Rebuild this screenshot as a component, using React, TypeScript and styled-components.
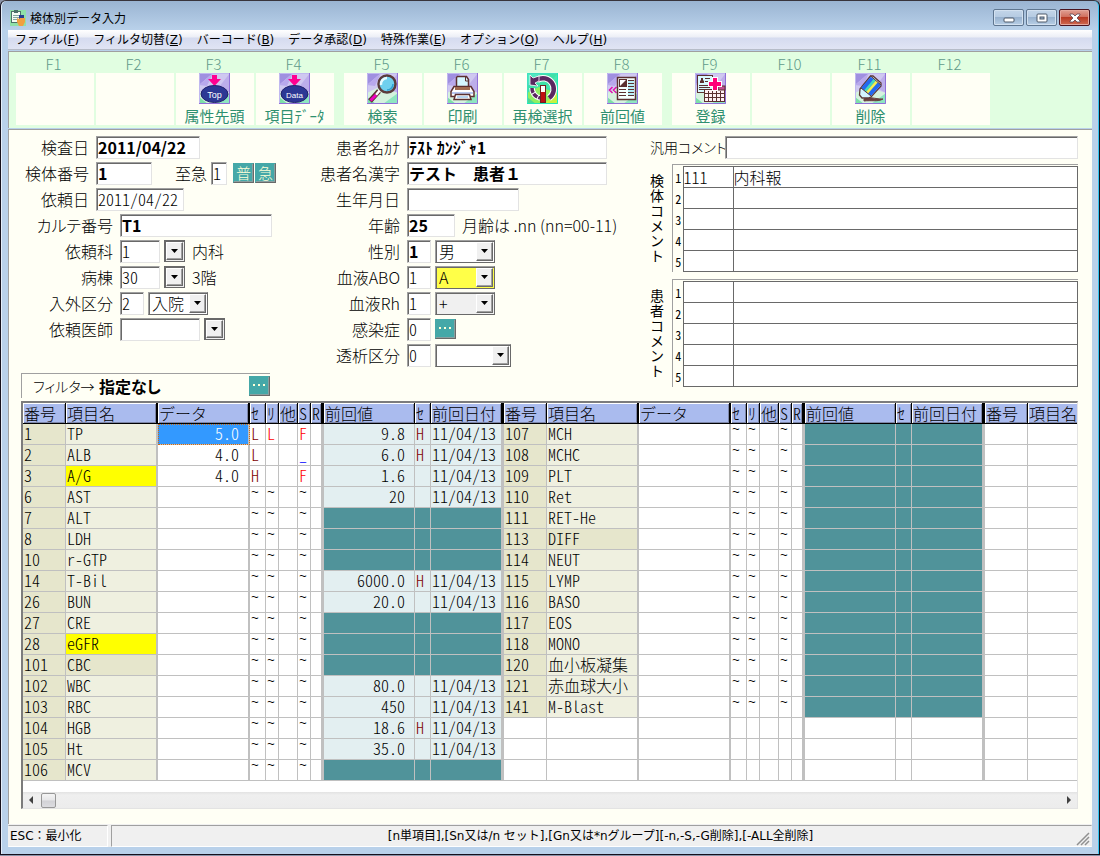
import React from "react";
import styled, { createGlobalStyle, css } from "styled-components";

const jp = '"Noto Sans CJK JP", "Liberation Sans", sans-serif';
const ui = '"DejaVu Sans", "Noto Sans CJK JP", sans-serif';

const GlobalStyle = createGlobalStyle`
  * { box-sizing: border-box; }
  html, body { margin: 0; padding: 0; }
  body { background: #10182c; font-family: ${jp}; font-size: 16px; font-weight: 300; color: #000; }
  button, input, select { font-family: inherit; font-weight: inherit; color: inherit; margin: 0; }
`;

const halfWidth = css`
  font-feature-settings: "hwid";
`;

const sunken = css`
  border: 1px solid #a0a0a0;
  border-right-color: #e3e3e3;
  border-bottom-color: #e3e3e3;
  box-shadow: inset 1px 1px 0 #696969;
`;

const raised = css`
  border: 1px solid #fff;
  border-right-color: #696969;
  border-bottom-color: #696969;
  box-shadow: inset -1px -1px 0 #a0a0a0;
`;

/* ---------- window ---------- */

const Desktop = styled.div`
  min-height: 100vh;
  padding-bottom: 1px;
  background: #8a93a8;
  display: flex;
`;

const Window = styled.div`
  flex: 1;
  min-width: 0;
  display: flex;
  flex-direction: column;
  padding: 0 7px 7px 7px;
  background: #b9d1ea;
  border: 1px solid #15101c;
  border-top-color: #38343c;
  border-radius: 6px 6px 0 0;
  box-shadow: inset -1px 0 0 #35c5f0, inset 1px 0 0 #e4eefa;
  background-image: linear-gradient(#9ab4d2, #b9d1ea 29px);
`;

const TitleBar = styled.header`
  height: 29px;
  padding: 4px 2px 0 2px;
  display: flex;
  align-items: center;
  gap: 4px;
`;

const TitleText = styled.h1`
  flex: 1;
  margin: 0;
  font-size: 12px;
  font-weight: 400;
  line-height: 18px;
`;

const Caption = styled.div`
  display: flex;
  gap: 2px;
`;

const CaptionButton = styled.button<{ $close?: boolean }>`
  width: 31px;
  height: 17px;
  padding: 0;
  display: flex;
  align-items: center;
  justify-content: center;
  border: 1px solid ${(p) => (p.$close ? "#4a1420" : "#5f7690")};
  border-radius: 2px;
  box-shadow: inset 0 0 0 1px ${(p) => (p.$close ? "#e5a79c" : "#d3e1f0")};
  background: ${(p) =>
    p.$close
      ? "linear-gradient(#e0a094, #d0705f 45%, #b83a24 50%, #cf6a50)"
      : "linear-gradient(#c3d5e9, #b6cbe2 45%, #98b2cf 50%, #b8cfe6)"};
`;

const MenuBar = styled.nav`
  height: 20px;
  padding-left: 7px;
  display: flex;
  gap: 14px;
  background: linear-gradient(#fff, #eceef6 7px, #d5dbef 8px, #e0e4f4);
  border-bottom: 1px solid #b6bcc8;
`;

const MenuItem = styled.button`
  padding: 2px 0 0 0;
  border: 0;
  background: none;
  font-family: ${ui};
  font-size: 12px;
  font-weight: 400;
  line-height: 17px;
  white-space: nowrap;
`;

/* ---------- toolbar ---------- */

const ToolBar = styled.div`
  margin-top: 1px;
  height: 77px;
  padding: 4px 0 0 7px;
  display: flex;
  gap: 10px;
  background: #e1fee1;
  border-top: 1px solid #a0a0a0;
  border-left: 1px solid #a0a0a0;
`;

const ToolGroup = styled.div`
  display: flex;
  gap: 2px;
`;

const ToolCell = styled.div`
  width: 78px;
  display: flex;
  flex-direction: column;
`;

const KeyName = styled.span`
  height: 17px;
  padding-right: 3px;
  font-size: 15px;
  line-height: 16px;
  text-align: center;
  color: #5f9a8a;
`;

const ToolButton = styled.button`
  width: 100%;
  height: 52px;
  padding: 0 1px 0 0;
  border: 0;
  background: #fffff5;
  display: flex;
  flex-direction: column;
  align-items: center;
  gap: 3px;
  font-size: 15px;
  font-weight: 400;
  line-height: 18px;
  color: #2f9070;
  white-space: nowrap;
`;

/* ---------- form ---------- */

const Body = styled.main`
  flex: 1;
  padding: 6px 14px 15px 12px;
  background: #fffff5;
  border-top: 1px solid #a0a0a0;
  border-left: 1px solid #a0a0a0;
  margin-top: 1px;
`;

const Form = styled.form`
  display: flex;
  align-items: flex-start;
`;

const LeftColumn = styled.section`
  width: 295px;
  display: flex;
  flex-direction: column;
  gap: 4px;
`;

const MiddleColumn = styled(LeftColumn)`
  width: 334px;
`;

const RightColumn = styled.section`
  flex: 1;
  min-width: 0;
`;

const Row = styled.div`
  height: 22px;
  display: flex;
  align-items: center;
  gap: 4px;
`;

const Label = styled.label<{ $w: number }>`
  width: ${(p) => p.$w}px;
  margin-right: 3px;
  text-align: right;
  line-height: 20px;
  white-space: nowrap;
  font-feature-settings: "palt";
`;

const UrgentLabel = styled.label`
  margin-left: 19px;
  line-height: 20px;
`;

const Field = styled.input<{ $w: number; $bold?: boolean }>`
  width: ${(p) => p.$w}px;
  height: 23px;
  padding: 0 1px 1px 1px;
  font-size: 16px;
  font-weight: ${(p) => (p.$bold ? 700 : "inherit")};
  background: #fff;
  border-radius: 0;
  ${sunken}
  ${(p) => !p.$bold && halfWidth}
`;

const WideField = styled(Field)`
  flex: 1;
  min-width: 0;
`;

const Note = styled.span`
  margin-left: 3px;
  line-height: 20px;
  white-space: nowrap;
  font-feature-settings: "palt";
`;

const Chip = styled.button`
  width: 21px;
  height: 20px;
  padding: 0;
  display: flex;
  align-items: center;
  justify-content: center;
  font-size: 15px;
  line-height: 16px;
  color: #ffffd8;
  background: #45a8a8;
  border: 1px solid #45a8a8;
  border-right-color: #696969;
  border-bottom-color: #696969;
  box-shadow: inset -1px -1px 0 #8aa0a0;
`;

const ChipPair = styled.div`
  display: flex;
  gap: 1px;
  margin-left: 2px;
`;

const DropButton = styled.button`
  width: 21px;
  height: 22px;
  padding: 1px;
  background: #f0f0f0;
  ${sunken}
  border-color: #696969;
`;

const DropFace = styled.span`
  width: 100%;
  height: 100%;
  display: flex;
  align-items: center;
  justify-content: center;
  background: #f0f0f0;
  ${raised}
`;

const SelectBox = styled.span<{ $w: number; $bg: string }>`
  width: ${(p) => p.$w}px;
  height: 23px;
  padding: 1px;
  display: grid;
  grid-template-columns: 1fr 17px;
  background: ${(p) => p.$bg};
  ${sunken}
  border-right-color: #696969;
  border-bottom-color: #696969;
  select {
    grid-area: 1 / 1 / 2 / 3;
    width: 100%;
    height: 100%;
    padding: 0 0 0 2px;
    appearance: none;
    border: 0;
    background: transparent;
    font-size: 16px;
    line-height: 18px;
  }
  > span {
    grid-area: 1 / 2 / 2 / 3;
    pointer-events: none;
  }
`;

const FilterPanel = styled.div`
  width: 249px;
  height: 25px;
  margin-top: 29px;
  padding-left: 11px;
  display: flex;
  align-items: center;
  border-top: 1px solid #a0a0a0;
  border-left: 1px solid #a0a0a0;
`;

const FilterCaption = styled.span`
  width: 66px;
  font-size: 14px;
  font-feature-settings: "palt";
`;

const FilterValue = styled.strong`
  flex: 1;
  font-size: 16px;
  font-weight: 700;
  font-feature-settings: "palt";
`;

const CommentRow = styled.div`
  height: 22px;
  display: flex;
  align-items: center;
  margin-bottom: 6px;
  label {
    width: 75px;
    font-size: 14px;
    font-feature-settings: "palt";
    white-space: nowrap;
  }
`;

const CommentBlock = styled.div`
  display: flex;
  margin-bottom: 7px;
`;

const VerticalCaption = styled.div`
  width: 22px;
  padding: 9px 8px 0 0;
  font-size: 14px;
  font-weight: 400;
  line-height: 15px;
  text-align: center;
  word-break: break-all;
`;

const CommentPanel = styled.div`
  flex: 1;
  height: 108px;
  padding: 1px 0 0 0;
  border-top: 1px solid #a0a0a0;
  border-left: 1px solid #a0a0a0;
`;

const CommentTable = styled.table`
  width: 100%;
  table-layout: fixed;
  border-collapse: collapse;
  th {
    width: 10px;
    padding: 2px 0 0 1px;
    font-size: 12px;
    font-weight: 400;
    line-height: 18px;
    ${halfWidth}
  }
  td {
    height: 21px;
    padding: 0;
    border: 1px solid #696969;
    background: #fff;
  }
  td:nth-child(2) {
    width: 50px;
  }
  input {
    display: block;
    width: 100%;
    height: 20px;
    padding: 0 0 1px 0;
    border: 0;
    background: none;
    font-size: 16px;
    ${halfWidth}
  }
`;

/* ---------- result grid ---------- */

const GridFrame = styled.div`
  margin-top: 3px;
  overflow: hidden;
  background: #fff;
  border: 2px solid #7c7c7c;
  border-right: 1px solid #e3e3e3;
  border-bottom: 1px solid #e3e3e3;
`;

const Grid = styled.table`
  width: 1097px;
  margin-bottom: 11px;
  table-layout: fixed;
  border-collapse: separate;
  border-spacing: 0;
  font-size: 16px;
  ${halfWidth}
`;

const HeadCell = styled.th<{ $line: number }>`
  height: 21px;
  padding: 0 0 1px 1px;
  font-weight: inherit;
  line-height: 18px;
  text-align: left;
  white-space: nowrap;
  background: #aabbee;
  border-right: ${(p) => p.$line}px solid #000;
  border-bottom: 1px solid #000;
  box-shadow: inset 1px 1px 0 #fff, inset -1px -1px 0 #7d86a8;
`;

const Cell = styled.td<{ $line: number; $bg?: string; $ink?: string; $right?: boolean; $top?: boolean; $selected?: boolean }>`
  height: 21px;
  padding: 0 ${(p) => (p.$right ? 9 : 0)}px ${(p) => (p.$top ? 0 : 3)}px 1px;
  line-height: 16px;
  vertical-align: ${(p) => (p.$top ? "top" : "middle")};
  white-space: nowrap;
  text-align: ${(p) => (p.$right ? "right" : "left")};
  color: ${(p) => p.$ink ?? "#000"};
  background: ${(p) => p.$bg ?? "#fff"};
  background-clip: padding-box;
  border-right: ${(p) => p.$line}px solid #c0c0c0;
  border-bottom: 1px solid #c0c0c0;
  ${(p) => p.$selected && "outline: 1px dotted #d06a10; outline-offset: -1px;"}
`;

const Tilde = styled.span`
  display: block;
  font-family: "Liberation Mono", monospace;
  font-size: 13px;
  line-height: 12px;
`;

const ScrollBar = styled.div`
  height: 16px;
  padding: 0 5px;
  display: flex;
  align-items: center;
  background: linear-gradient(#e2e2e2, #efefef 3px, #ececec);
`;

const Thumb = styled.span`
  width: 15px;
  height: 15px;
  margin: 0 auto 0 8px;
  border: 1px solid #979797;
  border-radius: 2px;
  background: linear-gradient(#f4f4f4, #e6e6e8 48%, #d2d2d6 52%, #dcdce0);
`;

/* ---------- status bar ---------- */

const StatusBar = styled.footer`
  height: 23px;
  padding-top: 1px;
  display: flex;
  gap: 3px;
  background: #f0f0f0;
  font-family: ${ui};
  font-size: 12px;
  font-weight: 400;
  line-height: 20px;
`;

const StatusPane = styled.div<{ $w?: number }>`
  ${(p) => (p.$w ? `width: ${p.$w}px;` : "flex: 1;")}
  padding: 0 1px;
  display: flex;
  justify-content: ${(p) => (p.$w ? "flex-start" : "center")};
  border: 1px solid #a0a0a0;
  border-left-color: ${(p) => (p.$w ? "#f0f0f0" : "#a0a0a0")};
  border-right-color: ${(p) => (p.$w ? "#fff" : "#f0f0f0")};
  border-bottom-color: #fff;
  white-space: nowrap;
`;

const StatusText = styled.span`
  flex: 1;
  padding-left: 12px;
  text-align: center;
`;

/* ---------- drawings ---------- */

const Triangle = () => (
  <svg width="7" height="4" viewBox="0 0 7 4">
    <path d="M0 0h7L3.500 4z" fill="#000" />
  </svg>
);

const Dots = () => (
  <svg width="13" height="8" viewBox="0 0 13 8">
    <path d="M0 2h2v2h-2zM5 2h2v2h-2zM10 2h2v2h-2z" fill="#ffffd8" />
  </svg>
);

function Tile({ children, green }: { children: React.ReactNode; green?: boolean }) {
  return (
    <svg width="31" height="31" viewBox="0 0 31 31">
      <rect width="31" height="31" fill={green ? "#3fe0a8" : "#cfc8f0"} />
      <path d="M0 0h14L0 12z" fill={green ? "#50e8c0" : "#a090e0"} />
      <path d="M14 0L8 13L0 12z" fill={green ? "#58dcc8" : "#b8a8ec"} />
      <path d="M31 0L20 14L31 20z" fill={green ? "#48e8b0" : "#bcaeea"} />
      <path d="M0 20L12 14L31 20V31H0z" fill={green ? "#90f060" : "#d5f2de"} />
      <path d="M31 20L16 31H31z" fill={green ? "#c8f040" : "#8ee6c0"} />
      <path d="M0 24L9 31H0z" fill={green ? "#50d890" : "#7ce0a8"} />
      <path d="M.5 31V.5H31" fill="none" stroke={green ? "#40e0c0" : "#c0b8f0"} />
      <path d="M30.500 0V30.500H0" fill="none" stroke={green ? "#20e8b8" : "#9070d8"} />
      {children}
    </svg>
  );
}

function Badge({ word }: { word: string }) {
  return (
    <Tile>
      <path d="M13 2h5v4h4l-6.500 7L9 6h4z" fill="#ff0090" />
      <ellipse cx="15.500" cy="21" rx="13.500" ry="8.500" fill="#2c3894" stroke="#20206c" />
      <text x="15.500" y="24.500" textAnchor="middle" fontSize={word.length > 3 ? 8 : 9} fontFamily="Liberation Sans" fontWeight="400" fill="#fff">
        {word}
      </text>
    </Tile>
  );
}

const icons: Record<string, React.ReactNode> = {
  top: <Badge word="Top" />,
  data: <Badge word="Data" />,
  search: (
    <Tile>
      <path d="M12 18L3 28" stroke="#5c3030" strokeWidth="5" />
      <path d="M13 17L9 22" stroke="#fff" strokeWidth="2.500" />
      <path d="M9 22L3.500 27.500" stroke="#f000c0" strokeWidth="3" />
      <circle cx="20" cy="11" r="8.500" fill="#6fd0ee" stroke="#5a3c3c" strokeWidth="2.500" />
      <path d="M14 12a6 6 0 0 1 6-7" fill="none" stroke="#e8fbff" strokeWidth="2.500" />
      <path d="M20 17a6 6 0 0 0 6-6" fill="none" stroke="#30a0d0" strokeWidth="1.500" />
    </Tile>
  ),
  print: (
    <Tile>
      <path d="M9.500 14.500V4.500l1-1h9l2 3v8z" fill="#d5f6ff" stroke="#5c3030" strokeWidth="1.500" />
      <path d="M18.500 4v4h3" fill="none" stroke="#5c3030" />
      <path d="M7 13.500h17l3 5v5H4v-5z" fill="#fff" stroke="#5c3030" strokeWidth="1.500" />
      <path d="M8 14h15v3H8z" fill="#a06a50" />
      <path d="M5 19h21v2H5z" fill="#b8c8f0" />
      <path d="M8.500 21.500h14l1.500 5h-17z" fill="#fff" stroke="#5c3030" strokeWidth="1.500" />
      <path d="M10 24h11" stroke="#6fa8e0" />
    </Tile>
  ),
  retry: (
    <Tile green>
      <path d="M10 7a10.500 10.500 0 1 1 12 18" fill="none" stroke="#fff" strokeWidth="6.500" />
      <path d="M10 7a10.500 10.500 0 1 1 12 18" fill="none" stroke="#5a2860" strokeWidth="4.500" />
      <path d="M3 12V2l3 3 6-2v5l-4 2 3 3z" fill="#5a2860" stroke="#fff" strokeWidth=".8" />
      <path d="M5 15a10 10 0 0 0 8 10" fill="none" stroke="#fff" strokeWidth="5.500" />
      <path d="M5 15a10 10 0 0 0 8 10" fill="none" stroke="#5a2860" strokeWidth="3.500" strokeDasharray="5 1" />
      <rect x="13.500" y="12.500" width="5" height="17" fill="#fff" stroke="#702020" />
      <rect x="14" y="19" width="4" height="10" fill="#c01010" />
    </Tile>
  ),
  previous: (
    <Tile>
      <path d="M5.500 14L2.500 17l3 3M9.500 14l-3 3 3 3" fill="none" stroke="#e010b0" strokeWidth="1.500" />
      <rect x="10.500" y="4.500" width="18" height="22" fill="#f4ffff" stroke="#5c3030" strokeWidth="1.500" />
      <rect x="12.500" y="6.500" width="7" height="7" fill="#fff" stroke="#5c3030" />
      <path d="M19 7v6h-6z" fill="#5c3030" />
      <path d="M21 7.500h6M21 10.500h6M21 13.500h6M12 16.500h7M21 16.500h6M12 19.500h7M21 19.500h6M12 22.500h7M21 22.500h6" stroke="#5c3030" />
      <path d="M21 9h6M21 12h6M21 15h6M21 18h6M21 21h6" stroke="#7adcf0" />
    </Tile>
  ),
  register: (
    <Tile>
      <rect x="2.500" y="2.500" width="15" height="17" fill="#d8f8ff" stroke="#5c3030" />
      <path d="M5 10V8l1-1V5h2v2l1 1v2z" fill="#5c3030" />
      <path d="M10 5.500h5M10 8.500h4M4 12.500h11M4 14.500h11M4 16.500h11" stroke="#5c3030" />
      <rect x="9.500" y="16.500" width="20" height="12" fill="#fff0f4" stroke="#5c3030" />
      <rect x="23" y="13" width="7" height="4" fill="#c05090" stroke="#5c3030" />
      <path d="M10 20.500h19M10 24.500h19M13.500 18v10M17.500 18v10M21.500 18v10M25.500 18v10" stroke="#5c3030" />
      <path d="M17 4h6v4h4v6h-4v4h-6v-4h-4V8h4z" fill="#fff" />
      <path d="M18 5h4v4h4v4h-4v4h-4v-4h-4V9h4z" fill="#ff0078" />
    </Tile>
  ),
  erase: (
    <Tile>
      <path d="M9 26c5-3 10 0 19 0c-5 3-12 1-19 2z" fill="#6a4040" stroke="#6a4040" />
      <path d="M5 16L15.500 3H18L26 10V13L16 24L13 25H7L4.500 22z" fill="#d4f4ff" stroke="#5c3838" strokeWidth="1.300" />
      <path d="M6 15L15.700 3.700L26 12L16 23z" fill="#2468f0" />
      <path d="M9 17.400L18.800 5.700L20.900 7.500L11 19z" fill="#40d8c0" />
      <path d="M11 19L20.900 7.500L22.900 9.300L13 20.600z" fill="#f4f050" />
      <path d="M6 15L16 23M15.700 3L26 12" fill="none" stroke="#5c3838" />
    </Tile>
  ),
};

const AppIcon = () => (
  <svg width="16" height="16" viewBox="0 0 16 16">
    <rect width="16" height="16" fill="#8fe0a8" />
    <rect x="1.500" y="1.500" width="9" height="11" fill="#f4fbf4" stroke="#4c7068" />
    <rect x="4" y="0" width="4" height="3" fill="#4c7068" />
    <path d="M3 5.500h6M3 7.500h6M3 9.500h5" stroke="#86a8a0" />
    <path d="M9 5h5v4H9z" fill="#283c90" />
    <path d="M7 8l2 1 1-1 5 0v4l-2 4H9l-2-4z" fill="#f0a040" />
  </svg>
);

/* ---------- data ---------- */

const menus: [string, string][] = [
  ["ファイル", "F"], ["フィルタ切替", "Z"], ["バーコード", "B"], ["データ承認", "D"],
  ["特殊作業", "E"], ["オプション", "O"], ["ヘルプ", "H"],
];

const toolGroups: [string, string?, string?][][] = [
  [["F1"], ["F2"], ["F3", "属性先頭", "top"], ["F4", "項目ﾃﾞｰﾀ", "data"]],
  [["F5", "検索", "search"], ["F6", "印刷", "print"], ["F7", "再検選択", "retry"], ["F8", "前回値", "previous"]],
  [["F9", "登録", "register"], ["F10"], ["F11", "削除", "erase"], ["F12"]],
];

type Item = {
  no: string;
  name: string;
  tone?: "yellow" | "group";
  value?: string;
  marks?: [string, string, string];
  prev?: [string, string];
};

const leftItems: Item[] = [
  { no: "1", name: "TP", value: "5.0", marks: ["L", "L", "F"], prev: ["9.8", "H"] },
  { no: "2", name: "ALB", value: "4.0", marks: ["L", "", "_"], prev: ["6.0", "H"] },
  { no: "3", name: "A/G", tone: "yellow", value: "4.0", marks: ["H", "", "F"], prev: ["1.6", ""] },
  { no: "6", name: "AST", prev: ["20", ""] },
  { no: "7", name: "ALT" },
  { no: "8", name: "LDH" },
  { no: "10", name: "r-GTP" },
  { no: "14", name: "T-Bil", prev: ["6000.0", "H"] },
  { no: "26", name: "BUN", prev: ["20.0", ""] },
  { no: "27", name: "CRE" },
  { no: "28", name: "eGFR", tone: "yellow" },
  { no: "101", name: "CBC", tone: "group" },
  { no: "102", name: "WBC", prev: ["80.0", ""] },
  { no: "103", name: "RBC", prev: ["450", ""] },
  { no: "104", name: "HGB", prev: ["18.6", "H"] },
  { no: "105", name: "Ht", prev: ["35.0", ""] },
  { no: "106", name: "MCV" },
];

const rightItems: Item[] = [
  ["107", "MCH"], ["108", "MCHC"], ["109", "PLT"], ["110", "Ret"], ["111", "RET-He"], ["113", "DIFF"],
  ["114", "NEUT"], ["115", "LYMP"], ["116", "BASO"], ["117", "EOS"], ["118", "MONO"],
  ["120", "血小板凝集"], ["121", "赤血球大小"], ["141", "M-Blast"],
].map(([no, name]) => ({ no, name, tone: name === "DIFF" ? "group" : undefined }));

const columns: [string, number, number][] = [
  ["番号", 43, 1], ["項目名", 92, 2], ["データ", 92, 2], ["ｾ", 16, 1], ["ﾘ", 13, 1], ["他", 19, 1],
  ["S", 13, 1], ["R", 13, 3], ["前回値", 91, 1], ["ｾ", 16, 1], ["前回日付", 73, 3],
];
const allColumns = [...columns, ...columns, ...columns.slice(0, 2)];

const teal = "#50939a";
const pale = "#e3eff1";
const olive = "#e6e6cc";
const cream = "#eff0e0";

function ItemCells({ item, selected }: { item?: Item; selected?: boolean }) {
  if (!item) {
    return <>{columns.map(([, , line], i) => <Cell key={i} $line={line} />)}</>;
  }
  const [se, ri, s] = item.marks ?? ["~", "~", "~"];
  const mark = (m: string, ink: string) => (
    <Cell $line={1} $top={m === "~"} $ink={m === "~" ? "#000" : m === "_" ? "#0000ff" : ink}>
      {m === "~" ? <Tilde>~</Tilde> : m}
    </Cell>
  );
  const bg = item.prev ? pale : teal;
  const nameBg = item.tone === "yellow" ? "#ffff00" : item.tone === "group" ? olive : cream;
  return (
    <>
      <Cell $line={1} $bg={olive}>{item.no}</Cell>
      <Cell $line={2} $bg={nameBg}>{item.name}</Cell>
      <Cell $line={2} $right $selected={selected} $bg={selected ? "#3399ff" : "#fff"} $ink={selected ? "#fff" : "#000"}>
        {item.value}
      </Cell>
      {mark(se, "#800000")}
      {mark(ri, "#ff0000")}
      <Cell $line={1} />
      {mark(s, "#ff0000")}
      <Cell $line={3} />
      <Cell $line={1} $right $bg={bg}>{item.prev?.[0]}</Cell>
      <Cell $line={1} $bg={bg} $ink="#800000">{item.prev?.[1]}</Cell>
      <Cell $line={3} $bg={bg}>{item.prev ? "11/04/13" : ""}</Cell>
    </>
  );
}

function Drop({ label }: { label: string }) {
  return (
    <DropButton type="button" aria-label={label}>
      <DropFace><Triangle /></DropFace>
    </DropButton>
  );
}

function Choice({ w, value, label, bg = "#fff" }: { w: number; value: string; label: string; bg?: string }) {
  return (
    <SelectBox $w={w} $bg={bg}>
      <select aria-label={label} defaultValue={value}>
        <option>{value}</option>
      </select>
      <DropFace><Triangle /></DropFace>
    </SelectBox>
  );
}

type EntryProps = {
  id: string;
  label: string;
  labelWidth: number;
  width: number;
  value?: string;
  bold?: boolean;
  children?: React.ReactNode;
};

function Entry({ id, label, labelWidth, width, value = "", bold, children }: EntryProps) {
  return (
    <Row>
      <Label htmlFor={id} $w={labelWidth}>{label}</Label>
      <Field id={id} $w={width} $bold={bold} defaultValue={value} />
      {children}
    </Row>
  );
}

function Comments({ title, first }: { title: string; first?: [string, string] }) {
  return (
    <CommentBlock>
      <VerticalCaption>{title}</VerticalCaption>
      <CommentPanel>
        <CommentTable>
          <tbody>
            {[1, 2, 3, 4, 5].map((n) => (
              <tr key={n}>
                <th scope="row">{n}</th>
                <td><input aria-label={`${title}${n} コード`} defaultValue={n === 1 && first ? first[0] : ""} /></td>
                <td><input aria-label={`${title}${n}`} defaultValue={n === 1 && first ? first[1] : ""} /></td>
              </tr>
            ))}
          </tbody>
        </CommentTable>
      </CommentPanel>
    </CommentBlock>
  );
}

export default function App() {
  return (
    <Desktop>
      <GlobalStyle />
      <Window>
        <TitleBar>
          <AppIcon />
          <TitleText>検体別データ入力</TitleText>
          <Caption>
            <CaptionButton aria-label="最小化">
              <svg width="12" height="10" viewBox="0 0 12 10">
                <rect x="1" y="5" width="10" height="4" rx="1" fill="#fff" stroke="#4c5868" />
              </svg>
            </CaptionButton>
            <CaptionButton aria-label="最大化">
              <svg width="12" height="10" viewBox="0 0 12 10">
                <rect x="1" y="1" width="10" height="8" rx="1" fill="#fff" stroke="#4c5868" />
                <rect x="4" y="4" width="4" height="2" fill="#9fb6d0" stroke="#4c5868" />
              </svg>
            </CaptionButton>
            <CaptionButton aria-label="閉じる" $close>
              <svg width="12" height="10" viewBox="0 0 12 10">
                <path d="M1 1h3l2 2 2-2h3v1L8 5l3 3v1H8L6 7 4 9H1V8l3-3-3-3z" fill="#fff" stroke="#5c4450" strokeWidth=".8" />
              </svg>
            </CaptionButton>
          </Caption>
        </TitleBar>
        <MenuBar>
          {menus.map(([name, key]) => (
            <MenuItem key={key}>{name}(<u>{key}</u>)</MenuItem>
          ))}
        </MenuBar>
        <ToolBar>
          {toolGroups.map((group, g) => (
            <ToolGroup key={g}>
              {group.map(([key, name, icon]) => (
                <ToolCell key={key}>
                  <KeyName>{key}</KeyName>
                  <ToolButton aria-label={name ?? key}>
                    {icon && icons[icon]}
                    {name}
                  </ToolButton>
                </ToolCell>
              ))}
            </ToolGroup>
          ))}
        </ToolBar>
        <Body>
          <Form onSubmit={(e) => e.preventDefault()}>
            <LeftColumn>
              <Entry id="examDate" label="検査日" labelWidth={68} width={104} value="2011/04/22" bold />
              <Entry id="specimen" label="検体番号" labelWidth={68} width={56} value="1" bold>
                <UrgentLabel htmlFor="urgent">至急</UrgentLabel>
                <Field id="urgent" $w={16} defaultValue="1" />
                <ChipPair>
                  <Chip type="button">普</Chip>
                  <Chip type="button">急</Chip>
                </ChipPair>
              </Entry>
              <Entry id="orderDate" label="依頼日" labelWidth={68} width={88} value="2011/04/22" />
              <Entry id="chart" label="カルテ番号" labelWidth={92} width={152} value="T1" bold />
              <Entry id="dept" label="依頼科" labelWidth={92} width={40} value="1">
                <Drop label="依頼科を選択" />
                <Note>内科</Note>
              </Entry>
              <Entry id="ward" label="病棟" labelWidth={92} width={40} value="30">
                <Drop label="病棟を選択" />
                <Note>3階</Note>
              </Entry>
              <Entry id="inout" label="入外区分" labelWidth={92} width={24} value="2">
                <Choice w={60} value="入院" label="入外区分を選択" />
              </Entry>
              <Entry id="doctor" label="依頼医師" labelWidth={92} width={80}>
                <Drop label="依頼医師を選択" />
              </Entry>
              <FilterPanel>
                <FilterCaption>フィルタ→</FilterCaption>
                <FilterValue>指定なし</FilterValue>
                <Chip type="button" aria-label="フィルタを選択"><Dots /></Chip>
              </FilterPanel>
            </LeftColumn>
            <MiddleColumn>
              <Entry id="kana" label="患者名ｶﾅ" labelWidth={84} width={200} value="ﾃｽﾄ ｶﾝｼﾞｬ1" bold />
              <Entry id="kanji" label="患者名漢字" labelWidth={84} width={200} value="テスト　患者１" bold />
              <Entry id="birth" label="生年月日" labelWidth={84} width={112} />
              <Entry id="age" label="年齢" labelWidth={84} width={48} value="25" bold>
                <Note>月齢は .nn (nn=00-11)</Note>
              </Entry>
              <Entry id="sex" label="性別" labelWidth={84} width={24} value="1" bold>
                <Choice w={60} value="男" label="性別を選択" />
              </Entry>
              <Entry id="abo" label="血液ABO" labelWidth={84} width={24} value="1">
                <Choice w={60} value="A" label="血液ABOを選択" bg="#ffff48" />
              </Entry>
              <Entry id="rh" label="血液Rh" labelWidth={84} width={24} value="1">
                <Choice w={60} value="+" label="血液Rhを選択" bg="#f0f0f0" />
              </Entry>
              <Entry id="infection" label="感染症" labelWidth={84} width={24} value="0">
                <Chip type="button" aria-label="感染症を選択"><Dots /></Chip>
              </Entry>
              <Entry id="dialysis" label="透析区分" labelWidth={84} width={24} value="0">
                <Choice w={76} value="" label="透析区分を選択" />
              </Entry>
            </MiddleColumn>
            <RightColumn>
              <CommentRow>
                <label htmlFor="general">汎用コメント</label>
                <WideField id="general" $w={100} />
              </CommentRow>
              <Comments title="検体コメント" first={["111", "内科報"]} />
              <Comments title="患者コメント" />
            </RightColumn>
          </Form>
          <GridFrame>
            <Grid>
              <colgroup>
                {allColumns.map(([, w], i) => <col key={i} style={{ width: w }} />)}
              </colgroup>
              <thead>
                <tr>
                  {allColumns.map(([name, , line], i) => (
                    <HeadCell key={i} scope="col" $line={line}>{name}</HeadCell>
                  ))}
                </tr>
              </thead>
              <tbody>
                {leftItems.map((item, i) => (
                  <tr key={item.no}>
                    <ItemCells item={item} selected={i === 0} />
                    <ItemCells item={rightItems[i]} />
                    <Cell $line={1} />
                    <Cell $line={2} />
                  </tr>
                ))}
              </tbody>
            </Grid>
            <ScrollBar>
              <svg width="5" height="8" viewBox="0 0 5 8"><path d="M5 0v8L1 4z" fill="#404040" /></svg>
              <Thumb />
              <svg width="5" height="8" viewBox="0 0 5 8"><path d="M0 0v8L4 4z" fill="#404040" /></svg>
            </ScrollBar>
          </GridFrame>
        </Body>
        <StatusBar>
          <StatusPane $w={100}>ESC：最小化</StatusPane>
          <StatusPane>
            <StatusText>[n単項目],[Sn又は/n セット],[Gn又は*nグループ][-n,-S,-G削除],[-ALL全削除]</StatusText>
            <svg width="14" height="20" viewBox="0 0 14 20">
              <path d="M1 19L13 7M5 19L13 11M9 19L13 15" stroke="#909090" strokeWidth="1.500" />
            </svg>
          </StatusPane>
        </StatusBar>
      </Window>
    </Desktop>
  );
}
